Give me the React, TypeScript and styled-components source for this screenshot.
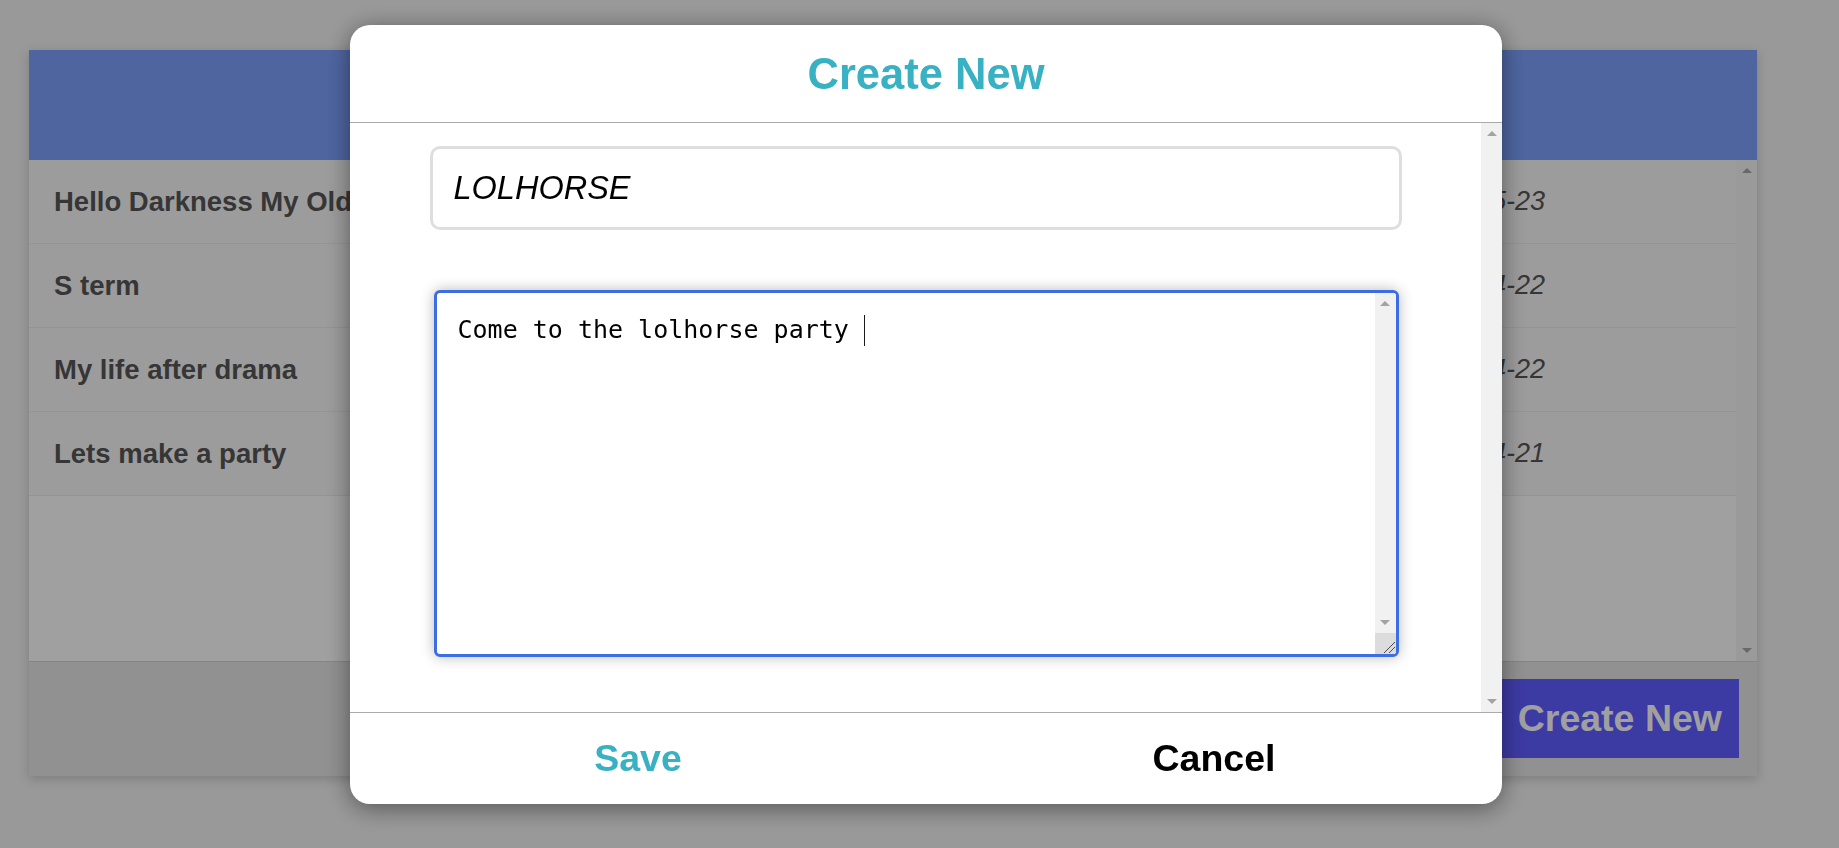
import React, { useEffect, useRef } from "react";
import styled, { createGlobalStyle } from "styled-components";

const GlobalStyle = createGlobalStyle`
  html, body { margin: 0; padding: 0; }
  body {
    background: #efefef;
    font-family: "Liberation Sans", Arial, sans-serif;
    overflow: hidden;
  }
  * { box-sizing: border-box; }
`;

/* ---------- classic scroll rail (drawn, since the page shows one) ---------- */

const Rail = styled.div`
  flex: none;
  width: 21px;
  display: flex;
  flex-direction: column;
  background: #f1f1f1;
`;

const RailButton = styled.div`
  flex: none;
  height: 21px;
  display: flex;
  align-items: center;
  justify-content: center;
`;

const RailTrack = styled.div`
  flex: 1;
`;

const Arrow = styled.span<{ $dir: "up" | "down" }>`
  width: 0;
  height: 0;
  border-left: 5px solid transparent;
  border-right: 5px solid transparent;
  ${(p) =>
    p.$dir === "up"
      ? "border-bottom: 5px solid #a3a3a3;"
      : "border-top: 5px solid #a3a3a3;"}
`;

const ResizeCorner = styled.div`
  flex: none;
  height: 21px;
  background: #dcdcdc;
  display: flex;
`;

function ScrollRail({ withCorner = false }: { withCorner?: boolean }) {
  return (
    <Rail>
      <RailButton>
        <Arrow $dir="up" />
      </RailButton>
      <RailTrack />
      <RailButton>
        <Arrow $dir="down" />
      </RailButton>
      {withCorner && (
        <ResizeCorner>
          <svg width="21" height="21" viewBox="0 0 21 21">
            <line x1="9" y1="20" x2="20" y2="9" stroke="#4a4a4a" strokeWidth="1" />
            <line x1="14" y1="20" x2="20" y2="14" stroke="#4a4a4a" strokeWidth="1" />
          </svg>
        </ResizeCorner>
      )}
    </Rail>
  );
}

/* ---------- page behind the dialog ---------- */

const Page = styled.div`
  padding: 50px 82px 0 29px;
  height: 848px;
`;

const Card = styled.section`
  display: flex;
  flex-direction: column;
  height: 726px;
  background: #ffffff;
  box-shadow: 0 3px 10px rgba(0, 0, 0, 0.18);
`;

const CardHeader = styled.header`
  height: 110px;
  flex: none;
  background: #7b9ffa;
`;

const ListArea = styled.div`
  height: 501px;
  flex: none;
  display: flex;
`;

const ListContent = styled.div`
  flex: 1;
  background: #fbfbfb;
`;

const Row = styled.div`
  display: grid;
  grid-template-columns: 1fr auto;
  align-items: center;
  height: 84px;
  padding: 0 191px 0 25px;
  background: #f4f4f4;
  border-bottom: 1px solid #e8e8e8;
`;

const RowTitle = styled.span`
  font-size: 27.5px;
  font-weight: 700;
  color: #555555;
  white-space: nowrap;
`;

const RowDate = styled.span`
  font-size: 27px;
  font-style: italic;
  color: #555555;
`;

const CardFooter = styled.footer`
  flex: 1;
  display: flex;
  justify-content: flex-end;
  align-items: flex-start;
  padding: 17px 18px;
  background: #e3e3e3;
  border-top: 1px solid #d0d0d0;
`;

const PrimaryButton = styled.button`
  width: 238px;
  height: 79px;
  border: none;
  background: #5f5cff;
  color: #fafafa;
  font-family: "Liberation Sans", Arial, sans-serif;
  font-size: 37.5px;
  font-weight: 700;
  padding: 0 17px 0 0;
  text-align: right;
  white-space: nowrap;
  cursor: pointer;
`;

/* ---------- dialog ---------- */

const Backdrop = styled.div`
  position: fixed;
  inset: 0;
  background: rgba(0, 0, 0, 0.36);
`;

const Modal = styled.div`
  position: fixed;
  top: 25px;
  left: 350px;
  width: 1152px;
  height: 779px;
  display: flex;
  flex-direction: column;
  background: #ffffff;
  border-radius: 20px;
  box-shadow: 0 4px 24px rgba(0, 0, 0, 0.45);
  overflow: hidden;
`;

const ModalHeader = styled.div`
  height: 98px;
  flex: none;
  display: flex;
  align-items: center;
  justify-content: center;
  border-bottom: 1px solid #aaaaaa;
`;

const ModalTitle = styled.h2`
  margin: 0;
  padding-top: 2px;
  font-size: 43.5px;
  font-weight: 700;
  color: #38b1c3;
`;

const ModalBody = styled.div`
  flex: 1;
  display: flex;
  min-height: 0;
`;

const BodyContent = styled.div`
  flex: 1;
  display: flex;
  flex-direction: column;
  align-items: center;
  padding-top: 23px;
`;

const TitleInput = styled.input`
  flex: none;
  width: 972px;
  height: 84px;
  padding: 0 19px 0 21px;
  border: 3px solid #dedede;
  border-radius: 10px;
  font-family: "Liberation Sans", Arial, sans-serif;
  font-size: 32.5px;
  font-style: italic;
  color: #000000;
  outline: none;
`;

const TextBox = styled.div`
  position: relative;
  flex: none;
  display: flex;
  width: 965px;
  height: 367px;
  margin-top: 60px;
  margin-left: 1px;
  border: 3px solid #3d6de2;
  border-radius: 6px;
  box-shadow: 0 0 14px rgba(0, 0, 0, 0.28);
  overflow: hidden;
  background: #ffffff;
`;

const monoFont = `"DejaVu Sans Mono", "Liberation Mono", monospace`;

const BodyTextArea = styled.textarea`
  flex: 1;
  padding: 22px 19px 22px 21px;
  border: none;
  background: transparent;
  font-family: ${monoFont};
  font-size: 25px;
  color: #000000;
  caret-color: transparent;
  resize: none;
  outline: none;
  overflow: hidden;
`;

/* text caret at the end of the typed text: 21px padding + n characters */
const Caret = styled.span<{ $chars: number }>`
  position: absolute;
  top: 22px;
  left: calc(21px + ${(p) => p.$chars}ch);
  width: 1px;
  height: 31px;
  background: #1a1a1a;
  font-family: ${monoFont};
  font-size: 25px;
  pointer-events: none;
`;

const ModalFooter = styled.div`
  height: 92px;
  flex: none;
  display: grid;
  grid-template-columns: 1fr 1fr;
  border-top: 1px solid #aaaaaa;
`;

const FooterButton = styled.button<{ $tone: "accent" | "plain" }>`
  border: none;
  background: transparent;
  font-family: "Liberation Sans", Arial, sans-serif;
  font-size: 37.5px;
  font-weight: 700;
  color: ${(p) => (p.$tone === "accent" ? "#38b1c3" : "#000000")};
  cursor: pointer;
`;

const notes = [
  { title: "Hello Darkness My Old Friend", date: "2017-05-23" },
  { title: "S term", date: "2017-04-22" },
  { title: "My life after drama", date: "2017-04-22" },
  { title: "Lets make a party", date: "2017-04-21" },
];

const bodyText = "Come to the lolhorse party ";

export default function App() {
  const areaRef = useRef<HTMLTextAreaElement>(null);

  useEffect(() => {
    const el = areaRef.current;
    if (el) {
      el.focus();
      const len = el.value.length;
      el.setSelectionRange(len, len);
    }
  }, []);

  return (
    <>
      <GlobalStyle />
      <Page>
        <Card>
          <CardHeader />
          <ListArea>
            <ListContent>
              {notes.map((n) => (
                <Row key={n.title}>
                  <RowTitle>{n.title}</RowTitle>
                  <RowDate>{n.date}</RowDate>
                </Row>
              ))}
            </ListContent>
            <ScrollRail />
          </ListArea>
          <CardFooter>
            <PrimaryButton>Create New</PrimaryButton>
          </CardFooter>
        </Card>
      </Page>
      <Backdrop />
      <Modal>
        <ModalHeader>
          <ModalTitle>Create New</ModalTitle>
        </ModalHeader>
        <ModalBody>
          <BodyContent>
            <TitleInput defaultValue="LOLHORSE" />
            <TextBox>
              <BodyTextArea ref={areaRef} defaultValue={bodyText} />
              <Caret $chars={bodyText.length} aria-hidden="true" />
              <ScrollRail withCorner />
            </TextBox>
          </BodyContent>
          <ScrollRail />
        </ModalBody>
        <ModalFooter>
          <FooterButton $tone="accent">Save</FooterButton>
          <FooterButton $tone="plain">Cancel</FooterButton>
        </ModalFooter>
      </Modal>
    </>
  );
}
